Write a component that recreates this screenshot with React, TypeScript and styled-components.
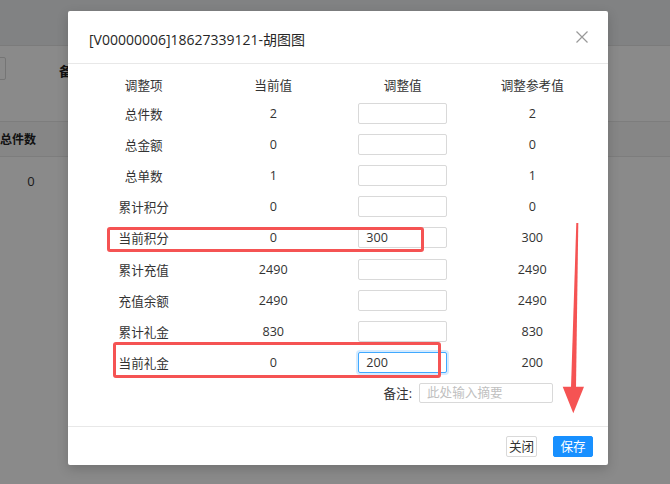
import styled, { createGlobalStyle } from "styled-components";

const GlobalStyle = createGlobalStyle`
  html, body {
    margin: 0;
    padding: 0;
  }
  body {
    font-family: "Open Sans", "Noto Sans CJK SC", sans-serif;
    color: #333;
  }
`;

const Page = styled.div`
  position: relative;
  width: 670px;
  height: 484px;
  overflow: hidden;
  background: #ffffff;
`;

// page under the mask
const TopBar = styled.div`
  height: 45px;
  background: #eef0f3;
  border-bottom: 1px solid #e3e3e3;
`;

const Filter = styled.div`
  display: flex;
  align-items: flex-start;
  height: 76px;
  padding-top: 11px;
  box-sizing: border-box;
  border-bottom: 1px solid #e8e8e8;
`;

const FilterInput = styled.div`
  width: 120px;
  height: 21px;
  margin-left: -116px;
  border: 1px solid #d9d9d9;
  border-radius: 2px;
`;

const FilterLabel = styled.span`
  margin-left: 53px;
  padding-top: 4px;
  font-size: 13px;
  font-weight: 600;
  color: #222;
`;

const HeadRow = styled.div`
  display: flex;
  align-items: center;
  height: 34px;
  background: #f7f7f7;
  border-bottom: 1px solid #e8e8e8;
`;

const HeadCell = styled.div`
  white-space: nowrap;
  font-size: 12px;
  font-weight: 600;
  color: #222;
`;

const BodyRow = styled.div`
  display: flex;
  align-items: center;
  height: 48px;
`;

const BodyCell = styled.div`
  width: 62px;
  text-align: center;
  font-size: 13px;
  color: #333;
`;

const Mask = styled.div`
  position: absolute;
  inset: 0;
  background: rgba(0, 0, 0, 0.46);
`;

// modal
const Modal = styled.div`
  position: absolute;
  left: 68px;
  top: 11px;
  width: 540px;
  height: 454px;
  display: flex;
  flex-direction: column;
  background: #fff;
  border-radius: 2px;
  box-shadow: 0 4px 12px rgba(0, 0, 0, 0.18);
`;

const Header = styled.div`
  display: flex;
  align-items: center;
  justify-content: space-between;
  height: 52px;
  padding: 0 20px 0 21px;
  border-bottom: 1px solid #e8e8e8;
`;

const Title = styled.div`
  padding-top: 3px;
  font-size: 14px;
  color: #262626;
  white-space: nowrap;
`;

const CloseBtn = styled.button`
  display: flex;
  padding: 0;
  border: 0;
  background: none;
  cursor: pointer;
`;

const Body = styled.div`
  flex: 1;
  padding: 6px 11px 0;
`;

const Grid = styled.div`
  display: grid;
  grid-template-columns: repeat(4, 1fr);
  grid-auto-rows: 31.1px;
`;

const HeadGrid = styled(Grid)`
  grid-auto-rows: 28px;
`;

const Cell = styled.div`
  display: flex;
  align-items: center;
  justify-content: center;
  font-size: 12.6px;
  color: #333;
  white-space: nowrap;
`;

const ValueInput = styled.input<{ $focus?: boolean }>`
  width: 89px;
  height: 21px;
  box-sizing: border-box;
  padding: 0 7px;
  border: 1px solid ${(p) => (p.$focus ? "#40a9ff" : "#d9d9d9")};
  box-shadow: ${(p) => (p.$focus ? "0 0 0 2px rgba(24,144,255,0.18)" : "none")};
  border-radius: 2px;
  outline: none;
  font-family: inherit;
  font-size: 12.6px;
  color: #333;
`;

const RemarkRow = styled.div`
  display: flex;
  align-items: center;
  justify-content: flex-end;
  gap: 7px;
  margin-top: 5px;
  padding-right: 44px;
`;

const RemarkLabel = styled.span`
  font-size: 12.6px;
  color: #333;
`;

const RemarkInput = styled.input`
  width: 134px;
  height: 20px;
  box-sizing: border-box;
  padding: 0 7px;
  border: 1px solid #d9d9d9;
  border-radius: 2px;
  outline: none;
  font-family: inherit;
  font-size: 12.6px;
  &::placeholder {
    color: #bfbfbf;
  }
`;

const Footer = styled.div`
  display: flex;
  align-items: center;
  justify-content: flex-end;
  gap: 16px;
  height: 38px;
  padding-right: 15px;
  border-top: 1px solid #e8e8e8;
`;

const Button = styled.button<{ $primary?: boolean; $w: number }>`
  width: ${(p) => p.$w}px;
  height: 21px;
  padding: 0;
  box-sizing: border-box;
  border: 1px solid ${(p) => (p.$primary ? "#1890ff" : "#d9d9d9")};
  border-radius: 2px;
  background: ${(p) => (p.$primary ? "#1890ff" : "#fff")};
  color: ${(p) => (p.$primary ? "#fff" : "#333")};
  font-family: inherit;
  font-size: 12.6px;
  line-height: 19px;
  cursor: pointer;
`;

// red annotations drawn over the screenshot
const Mark = styled.div<{ $x: number; $y: number; $w: number; $h: number }>`
  position: absolute;
  left: ${(p) => p.$x}px;
  top: ${(p) => p.$y}px;
  width: ${(p) => p.$w}px;
  height: ${(p) => p.$h}px;
  box-sizing: border-box;
  border: 3.5px solid #f55353;
  border-radius: 3px;
`;

const Arrow = styled.svg`
  position: absolute;
  left: 560px;
  top: 220px;
`;

const rows: [string, string, string, string][] = [
  ["总件数", "2", "", "2"],
  ["总金额", "0", "", "0"],
  ["总单数", "1", "", "1"],
  ["累计积分", "0", "", "0"],
  ["当前积分", "0", "300", "300"],
  ["累计充值", "2490", "", "2490"],
  ["充值余额", "2490", "", "2490"],
  ["累计礼金", "830", "", "830"],
  ["当前礼金", "0", "200", "200"],
];

const App = () => {
  return (
    <Page>
      <GlobalStyle />
      <TopBar />
      <Filter>
        <FilterInput />
        <FilterLabel>备注</FilterLabel>
      </Filter>
      <HeadRow>
        <HeadCell>总件数</HeadCell>
      </HeadRow>
      <BodyRow>
        <BodyCell>0</BodyCell>
      </BodyRow>

      <Mask />

      <Modal>
        <Header>
          <Title>[V00000006]18627339121-胡图图</Title>
          <CloseBtn>
            <svg width="12" height="12" viewBox="0 0 12 12">
              <path
                d="M0.5 0.5 L11.5 11.5 M11.5 0.5 L0.5 11.5"
                stroke="#999"
                strokeWidth="1.2"
              />
            </svg>
          </CloseBtn>
        </Header>
        <Body>
          <HeadGrid>
            <Cell>调整项</Cell>
            <Cell>当前值</Cell>
            <Cell>调整值</Cell>
            <Cell>调整参考值</Cell>
          </HeadGrid>
          <Grid>
            {rows.map((r, i) => (
              <>
                <Cell key={"a" + i}>{r[0]}</Cell>
                <Cell key={"b" + i}>{r[1]}</Cell>
                <Cell key={"c" + i}>
                  <ValueInput defaultValue={r[2]} $focus={i === 8} />
                </Cell>
                <Cell key={"d" + i}>{r[3]}</Cell>
              </>
            ))}
          </Grid>
          <RemarkRow>
            <RemarkLabel>备注:</RemarkLabel>
            <RemarkInput placeholder="此处输入摘要" />
          </RemarkRow>
        </Body>
        <Footer>
          <Button $w={31}>关闭</Button>
          <Button $w={40} $primary>
            保存
          </Button>
        </Footer>
      </Modal>

      <Mark $x={106.7} $y={226.7} $w={317.3} $h={25} />
      <Mark $x={113.3} $y={341.7} $w={327.4} $h={36.5} />
      <Arrow width="28" height="196" viewBox="0 0 28 196">
        <polygon points="16.3,3 18.3,3 16,168 11,168" fill="#f55353" />
        <polygon points="2.7,166.7 24,166.7 13.3,193.3" fill="#f55353" />
      </Arrow>
    </Page>
  );
};

export default App;
